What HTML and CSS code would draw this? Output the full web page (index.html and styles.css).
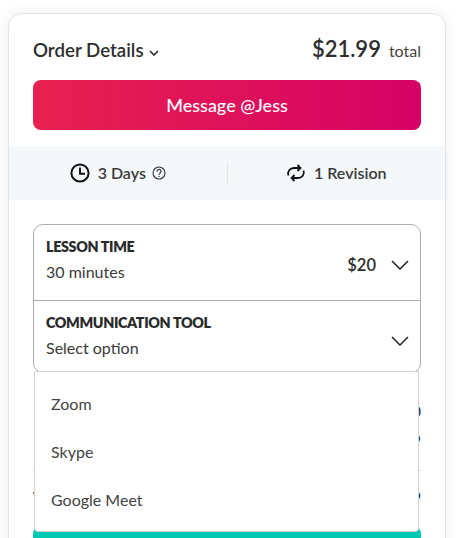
FILE: index.html
```html
<!DOCTYPE html>
<html lang="en">
<head>
<meta charset="utf-8">
<title>Order Details</title>
<link rel="stylesheet" href="styles.css">
</head>
<body>
<main class="card">
  <header class="head">
    <div class="title">Order Details
      <svg class="caret" width="10" height="6" viewBox="0 0 10 6"><path d="M1 1l4 4 4-4" fill="none" stroke="#222" stroke-width="1.5"/></svg>
    </div>
    <div class="price"><strong>$21.99</strong><span>total</span></div>
  </header>
  <div class="pad"><button class="message">Message @Jess</button></div>
  <section class="band">
    <div class="fact">
      <svg width="20" height="20" viewBox="0 0 20 20" fill="none" stroke="#111" stroke-width="2"><circle cx="10" cy="10" r="8.6"/><path d="M10 4.6V10.8H15" stroke-width="1.9"/></svg>
      <span class="fact-text">3 Days</span>
      <svg class="help" width="14" height="14" viewBox="0 0 14 14" fill="none" stroke="#333" stroke-width="1.1"><circle cx="7" cy="7" r="6"/><path d="M5 5.5a2 2 0 1 1 3 1.7c-.7.4-1 .8-1 1.6" stroke-width="1.2"/><circle cx="7" cy="10.4" r=".7" fill="#333" stroke="none"/></svg>
    </div>
    <div class="sep"></div>
    <div class="fact">
      <svg width="20" height="20" viewBox="0 0 20 20" fill="none" stroke="#111" stroke-width="1.8"><path d="M2.500 12.500C1 8.500 4 5 8 5H14.500"/><path d="M11.500 2L14.500 5 11.500 8"/><path d="M17.500 7.500C19 11.500 16 15 12 15H5.500"/><path d="M8.500 12L5.500 15 8.500 18"/></svg>
      <span class="fact-text">1 Revision</span>
    </div>
  </section>
  <section class="options">
    <div class="box">
      <div class="opt first">
        <div>
          <h3>LESSON TIME</h3>
          <p>30 minutes</p>
        </div>
        <div class="side"><b>$20</b>
          <svg width="18" height="10" viewBox="0 0 18 10"><path d="M1 1l8 8 8-8" fill="none" stroke="#222" stroke-width="1.500"/></svg>
        </div>
      </div>
      <div class="opt second">
        <div>
          <h3>COMMUNICATION TOOL</h3>
          <p>Select option</p>
        </div>
        <div class="side">
          <svg width="18" height="10" viewBox="0 0 18 10"><path d="M1 1l8 8 8-8" fill="none" stroke="#222" stroke-width="1.500"/></svg>
        </div>
      </div>
      <ul class="menu">
        <li>Zoom</li>
        <li>Skype</li>
        <li>Google Meet</li>
      </ul>
    </div>
    <div class="summary">
      <div class="line"><span>Lesson</span><span>$20</span></div>
      <div class="line"><span>Fee</span><span>$1.99</span></div>
      <hr>
      <div class="line total"><span>Total</span><span>$21.99</span></div>
    </div>
    <div class="pay"></div>
  </section>
</main>
</body>
</html>
```
FILE: styles.css
```css
* { box-sizing: border-box; }
html, body { margin: 0; height: 538px; overflow: hidden; background: #fff; }
body { padding: 13px 0 0 8px; font-family: Lato, "Liberation Sans", sans-serif; color: #2e2e2e; }
.card {
  width: 438px;
  height: 620px;
  background: #fff;
  border: 1px solid #e2e2e2;
  border-radius: 14px;
  box-shadow: 0 0 16px rgba(0,0,0,.07);
  overflow: hidden;
}
.head { display: flex; justify-content: space-between; align-items: baseline; padding: 21px 24px 0 24px; height: 66px; }
.title { font-size: 18.7px; font-weight: 600; color: #2e2e2e; }
.caret { margin-left: 1px; vertical-align: 1px; }
.price { display: flex; align-items: baseline; gap: 8px; }
.price strong { font-size: 22px; font-weight: 600; }
.price span { font-size: 16px; color: #444; }
.pad { padding: 0 24px; }
.message {
  display: block; width: 100%; height: 50px; border: 0; border-radius: 8px;
  background: linear-gradient(90deg, #e7214f, #d60265);
  color: #fff; font: 500 18px Lato, sans-serif;
}
.band {
  margin-top: 16px; height: 54px; background: #f5f8fb;
  display: flex; align-items: center;
}
.fact { flex: 1; display: flex; align-items: center; justify-content: center; gap: 8px; font-size: 16px; font-weight: 600; color: #3a3a3a; }
.fact-text { padding-bottom: 2px; }
.help { margin-left: -2px; }
.sep { width: 1px; height: 22px; background: #e2e6ea; }
.options { padding: 24px 24px 0; }
.box { position: relative; border: 1px solid #adadad; border-radius: 10px; background: #fff; }
.opt { display: flex; justify-content: space-between; align-items: flex-start; padding: 13px 11px 0 12px; }
.first { height: 76px; border-bottom: 1px solid #adadad; }
.second { height: 71px; }
.opt h3 { margin: 0; font-size: 14.3px; font-weight: 800; letter-spacing: -.35px; color: #2a2a2a; line-height: 17px; }
.opt p { margin: 8px 0 0; font-size: 16px; line-height: 18px; color: #3a3a3a; }
.side { display: flex; align-items: center; gap: 15px; height: 20px; margin-top: 17px; font-size: 16.5px; }
.side b { font-weight: 600; }
.menu {
  position: absolute; z-index: 2; top: 146px; left: 0; width: 385px; height: 161px;
  margin: 0; padding: 7px 0 0; list-style: none; background: #fff;
  border: 1px solid #d2d2d2; border-radius: 0 0 4px 4px;
}
.menu li { height: 48px; padding: 0 16px; display: flex; align-items: center; font-size: 16px; color: #444; }
.summary { padding-top: 27px; font-size: 16px; }
.line { display: flex; justify-content: space-between; height: 29px; line-height: 22px; }
.summary hr { margin: 12px 0 15px; border: 0; border-top: 1px solid #ddd; }
.total { font-weight: 700; }
.pay { height: 50px; margin-top: 11px; border-radius: 8px; background: #00c9b1; }
```
